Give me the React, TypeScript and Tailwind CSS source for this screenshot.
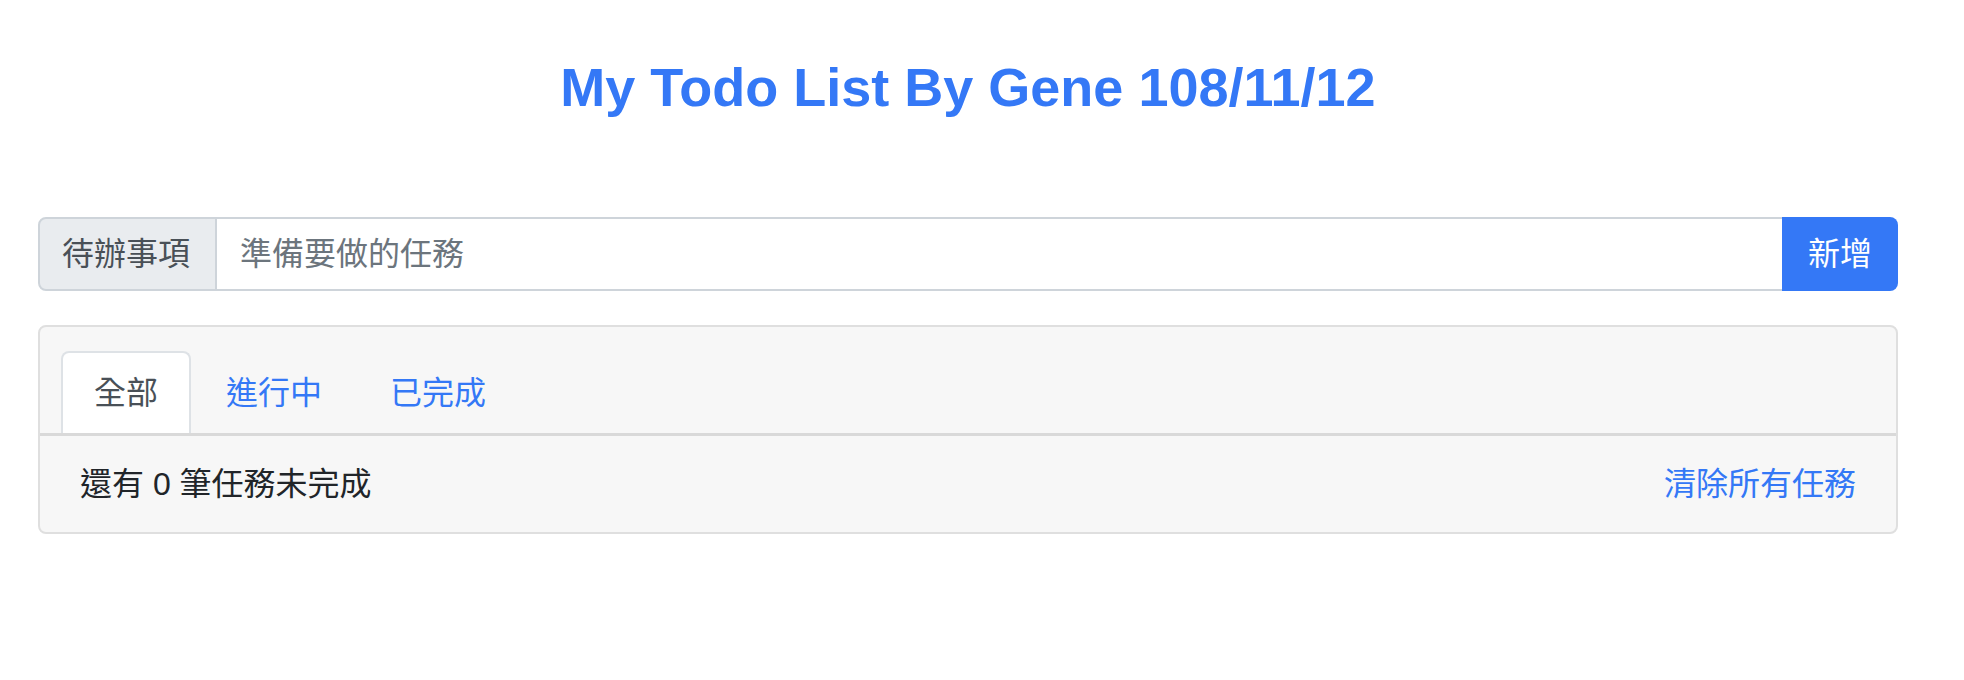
import { useState } from 'react';

const FONT = { fontFamily: '"Liberation Sans", "Noto Sans CJK TC", sans-serif' };

const TABS = ['全部', '進行中', '已完成'];

export default function App() {
  const [active, setActive] = useState(0);
  const [text, setText] = useState('');

  return (
    <div className="min-h-screen bg-white pt-[55px] pl-[38px] pr-[66px]" style={FONT}>
      {/* Title */}
      <h3 className="text-center text-[54px] font-bold leading-[65px] text-[#3478f6]">
        My Todo List By Gene 108/11/12
      </h3>

      {/* Input group */}
      <div className="mt-[97px] flex h-[74px]">
        <span className="flex w-[179px] shrink-0 items-center rounded-l-[8px] border-2 border-[#ced4da] bg-[#e9ecef] pl-[22px] text-[32px] text-[#495057]">
          待辦事項
        </span>
        <input
          value={text}
          onChange={(e) => setText(e.target.value)}
          placeholder="準備要做的任務"
          className="min-w-0 flex-1 border-y-2 border-r-0 border-[#ced4da] bg-white px-[23px] text-[32px] text-[#495057] outline-none placeholder:text-[#6c757d]"
          style={FONT}
        />
        <button className="w-[116px] shrink-0 rounded-r-[8px] bg-[#3478f6] text-[32px] text-white">
          新增
        </button>
      </div>

      {/* Card */}
      <div className="mt-[34px] overflow-hidden rounded-[8px] border-2 border-[#dfdfdf] bg-[#f7f7f7]">
        <div className="flex gap-[2px] border-b-[3px] border-[#d9d9d9] pl-[21px] pt-[24px]">
          {TABS.map((t, i) => (
            <button
              key={t}
              onClick={() => setActive(i)}
              className={`h-[82px] rounded-t-[8px] border-2 border-b-0 px-[31px] text-[32px] leading-[78px] ${
                i === active
                  ? 'border-[#dee2e6] bg-white text-[#495057]'
                  : 'border-transparent text-[#3478f6]'
              }`}
            >
              {t}
            </button>
          ))}
        </div>
        <div className="flex items-center justify-between px-[40px] py-[24px] text-[32px] leading-[48px]">
          <span className="text-[#212529]">還有 0 筆任務未完成</span>
          <a href="#" className="text-[#3478f6]">清除所有任務</a>
        </div>
      </div>
    </div>
  );
}
